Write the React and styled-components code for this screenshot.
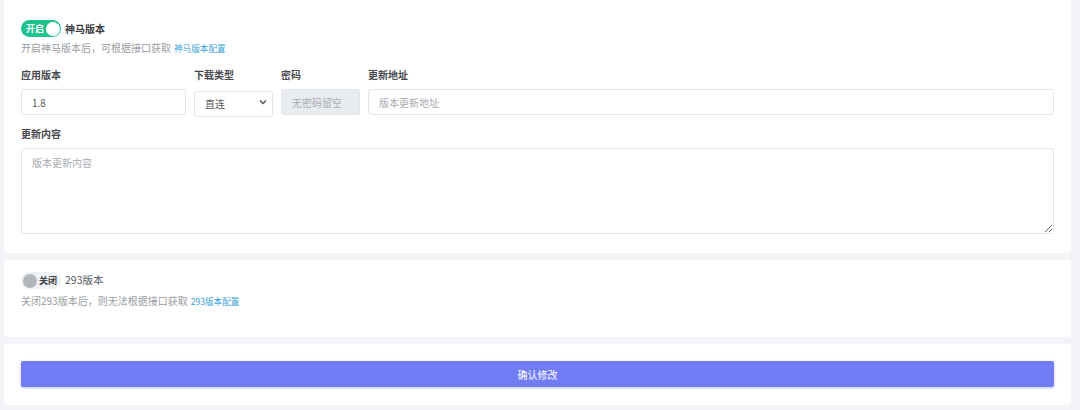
import React from "react";
import styled, { createGlobalStyle } from "styled-components";

const Global = createGlobalStyle`
  html, body { margin: 0; padding: 0; background: #f3f4f7; }
  body { font-family: "Noto Sans CJK SC", "Noto Sans", "Liberation Sans", sans-serif; }
  * { box-sizing: border-box; }
`;

const Page = styled.div`
  display: flex;
  flex-direction: column;
  gap: 7px;
  padding: 0 9px 5px 4px;
`;

const Card = styled.section`
  background: #fff;
  border-radius: 0 0 4px 4px;
  padding: ${(p) => p.$pad};
  display: flex;
  flex-direction: column;
`;

const SwitchRow = styled.div`
  display: flex;
  align-items: center;
  gap: 4px;
  height: 17px;
`;

const Toggle = styled.span`
  position: relative;
  flex: 0 0 40px;
  width: 40px;
  height: 17px;
  border-radius: 9px;
  background: ${(p) => (p.$on ? "#1cc38e" : "#eef1f6")};
  display: flex;
  align-items: center;
  flex-direction: ${(p) => (p.$on ? "row" : "row-reverse")};
  justify-content: space-between;
  padding: ${(p) => (p.$on ? "0 1.5px 0 5px" : "0 4px 0 2px")};
`;

const ToggleText = styled.span`
  font-size: 9px;
  font-weight: 700;
  line-height: 1;
  white-space: nowrap;
  color: ${(p) => (p.$on ? "#fff" : "#3d4046")};
`;

const Knob = styled.span`
  flex: 0 0 14px;
  width: 14px;
  height: 14px;
  border-radius: 50%;
  background: ${(p) =>
    p.$on
      ? "#fff"
      : "radial-gradient(circle, #9ea2a8 0.6px, transparent 0.8px) 0 0 / 2px 2px, #c3c6cb"};
`;

const Title = styled.span`
  font-size: ${(p) => (p.$bold ? "10px" : "10.5px")};
  font-weight: ${(p) => (p.$bold ? 700 : 400)};
  color: ${(p) => (p.$bold ? "#3a3d42" : "#55585d")};
  line-height: 1;
`;

const Hint = styled.p`
  margin: ${(p) => p.$mt} 0 0;
  font-size: 10px;
  line-height: 14px;
  color: #9a9da3;
`;

const Link = styled.a`
  color: #3aa3d6;
  font-size: 8.6px;
  text-decoration: none;
  margin-left: 3px;
`;

const FormGrid = styled.div`
  display: grid;
  grid-template-columns: 165px 79px 79px 1fr;
  column-gap: 8px;
  margin-top: 13px;
`;

const Field = styled.div`
  display: flex;
  flex-direction: column;
  gap: 7px;
  margin-top: ${(p) => p.$mt || "0"};
`;

const Label = styled.label`
  font-size: 10px;
  font-weight: 700;
  color: #46494e;
  line-height: 14px;
`;

const inputBase = `
  width: 100%;
  border: 1px solid #e4e6ea;
  border-radius: 3px;
  font-family: "Noto Sans CJK SC", "Noto Sans", sans-serif;
  font-size: 10px;
  color: #5a5d62;
  outline: none;
  &::placeholder { color: #a8abb0; }
`;

const Input = styled.input`
  ${inputBase}
  height: 26px;
  padding: 0 10px;
  background: ${(p) => (p.disabled ? "#e9ecef" : "#fff")};
`;

const SelectWrap = styled.div`
  position: relative;
  height: 26px;
`;

const Select = styled.select`
  ${inputBase}
  height: 26px;
  padding: 0 10px;
  appearance: none;
  background: #fff;
`;

const Chevron = styled.svg`
  position: absolute;
  right: 6px;
  top: 10px;
  width: 8px;
  height: 6px;
  pointer-events: none;
`;

const TextArea = styled.textarea`
  ${inputBase}
  height: 86px;
  padding: 6px 10px;
  resize: vertical;
  display: block;
`;

const Button = styled.button`
  height: 26px;
  width: 100%;
  border: none;
  border-radius: 2px;
  background: #717cf5;
  color: #fff;
  font-family: "Noto Sans CJK SC", "Noto Sans", sans-serif;
  font-size: 10px;
  box-shadow: 0 1px 3px rgba(113, 124, 245, 0.45);
`;

export default function App() {
  return (
    <>
      <Global />
      <Page>
        <Card $pad="20px 17px 19px">
          <SwitchRow>
            <Toggle $on>
              <ToggleText $on>开启</ToggleText>
              <Knob $on />
            </Toggle>
            <Title $bold>神马版本</Title>
          </SwitchRow>
          <Hint $mt="4px">
            开启神马版本后，可根据接口获取<Link href="#">神马版本配置</Link>
          </Hint>
          <FormGrid>
            <Field>
              <Label>应用版本</Label>
              <Input defaultValue="1.8" />
            </Field>
            <Field>
              <Label>下载类型</Label>
              <SelectWrap>
                <Select defaultValue="direct">
                  <option value="direct">直连</option>
                </Select>
                <Chevron viewBox="0 0 8 6">
                  <path d="M1 1.5 L4 4.5 L7 1.5" fill="none" stroke="#555" strokeWidth="1.4" />
                </Chevron>
              </SelectWrap>
            </Field>
            <Field>
              <Label>密码</Label>
              <Input disabled placeholder="无密码留空" />
            </Field>
            <Field>
              <Label>更新地址</Label>
              <Input placeholder="版本更新地址" />
            </Field>
          </FormGrid>
          <Field $mt="12px">
            <Label>更新内容</Label>
            <TextArea placeholder="版本更新内容" />
          </Field>
        </Card>
        <Card $pad="12px 17px 29px">
          <SwitchRow>
            <Toggle>
              <ToggleText>关闭</ToggleText>
              <Knob />
            </Toggle>
            <Title>293版本</Title>
          </SwitchRow>
          <Hint $mt="5px">
            关闭293版本后，则无法根据接口获取<Link href="#">293版本配置</Link>
          </Hint>
        </Card>
        <Card $pad="17px 17px 18px">
          <Button>确认修改</Button>
        </Card>
      </Page>
    </>
  );
}
